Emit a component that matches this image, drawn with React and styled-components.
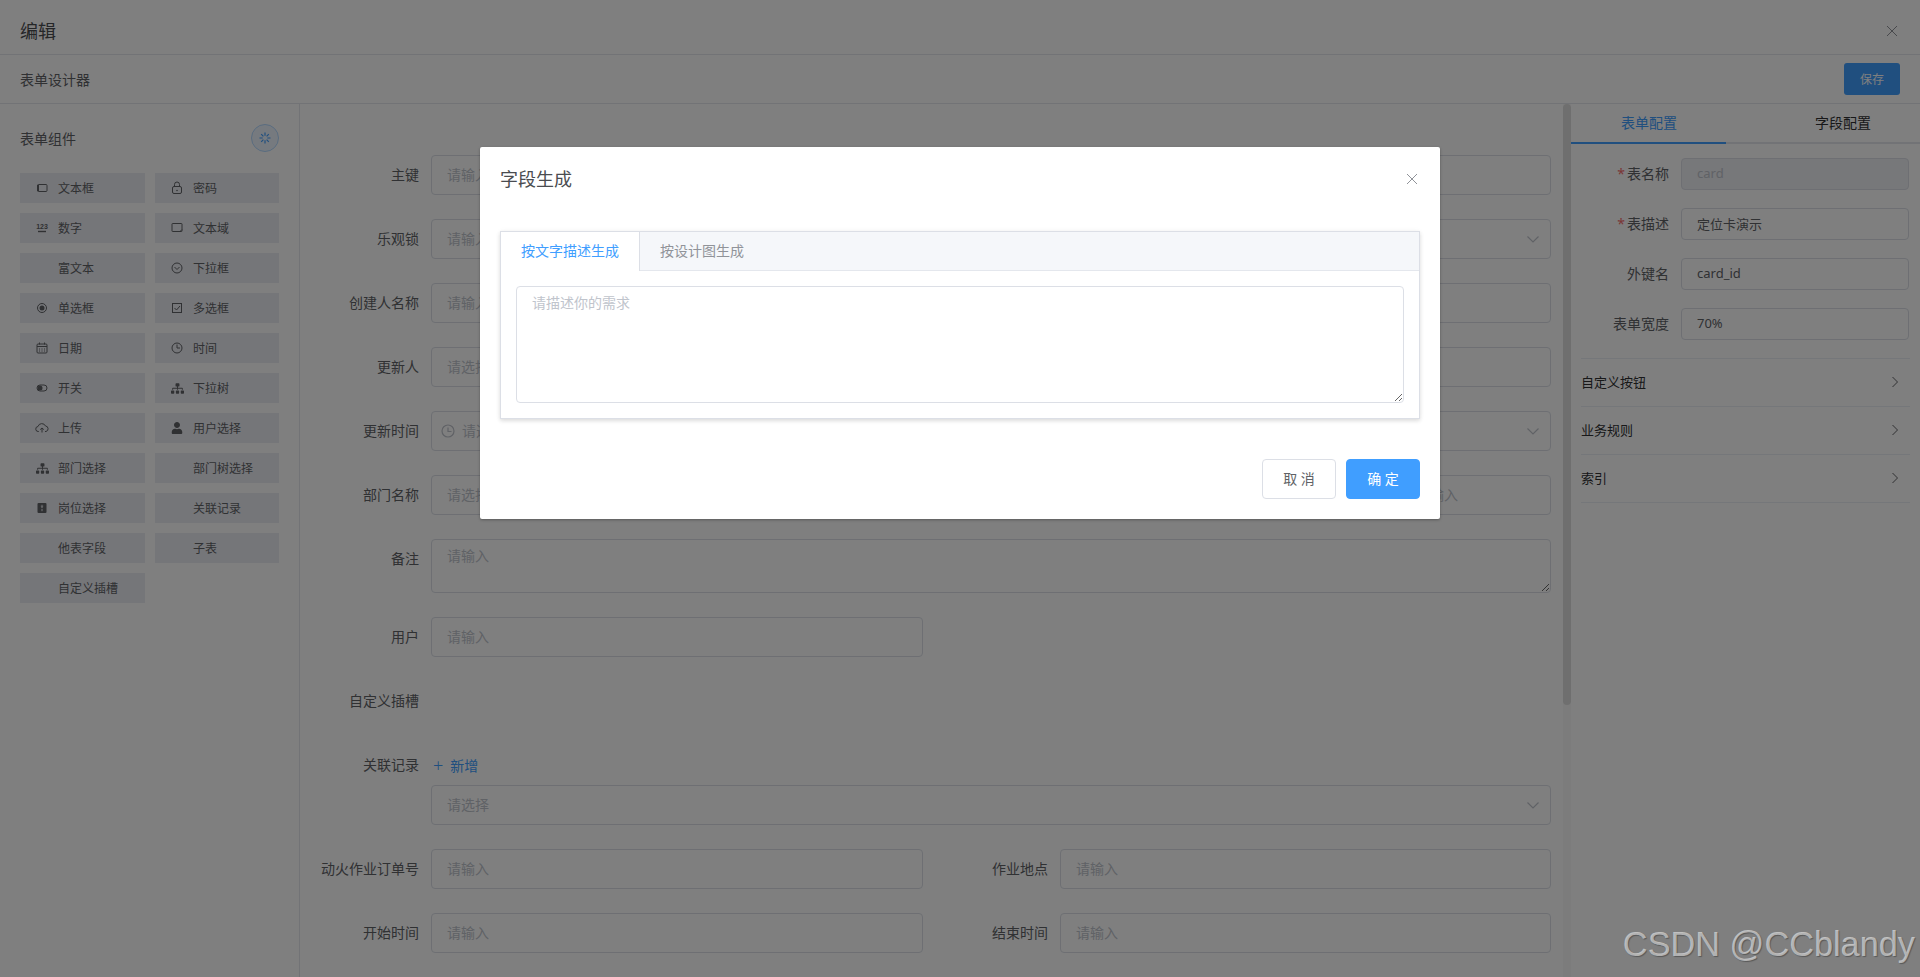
import React from "react";
import styled, { createGlobalStyle } from "styled-components";
import { FaSitemap, FaUser } from "react-icons/fa";

const GlobalStyle = createGlobalStyle`
  html, body {
    margin: 0;
    padding: 0;
    background: #fff;
  }
  * {
    box-sizing: border-box;
  }
  body, input, textarea, button {
    font-family: "Noto Sans", "Noto Sans CJK SC", "Liberation Sans", sans-serif;
  }
  input::placeholder, textarea::placeholder {
    color: #c0c4cc;
    opacity: 1;
  }
`;

const line = { fill: "none", stroke: "currentColor", strokeWidth: 1 };

const icons = {
  input: (
    <svg width="16" height="16" viewBox="0 0 16 16">
      <rect x="3.5" y="4.5" width="9.5" height="7" rx="1" {...line} />
      <rect x="3" y="5" width="2" height="6" fill="currentColor" />
    </svg>
  ),
  lock: (
    <svg width="16" height="16" viewBox="0 0 16 16">
      <rect x="3.5" y="6.5" width="9" height="7" rx="1.5" {...line} />
      <path d="M5.5 6.5V4.5a2.5 2.5 0 0 1 5 0v2" {...line} />
      <circle cx="8" cy="10.5" r="0.8" fill="currentColor" />
    </svg>
  ),
  number: (
    <svg width="16" height="16" viewBox="0 0 16 16">
      <text x="8" y="8.5" textAnchor="middle" fontSize="7" fontWeight="700" fontFamily="Liberation Sans" fill="currentColor">123</text>
      <path d="M4 11.5h8" {...line} strokeWidth="1.4" />
    </svg>
  ),
  textarea: (
    <svg width="16" height="16" viewBox="0 0 16 16">
      <rect x="3" y="3.5" width="10" height="8" rx="0.5" {...line} />
      <path d="M11 11.5l2-2" {...line} />
    </svg>
  ),
  select: (
    <svg width="16" height="16" viewBox="0 0 16 16">
      <circle cx="8" cy="8" r="5" {...line} />
      <path d="M5.5 7l2.5 2.5L10.5 7" {...line} />
    </svg>
  ),
  radio: (
    <svg width="16" height="16" viewBox="0 0 16 16">
      <circle cx="8" cy="8" r="4.5" {...line} />
      <circle cx="8" cy="8" r="2.5" fill="currentColor" />
    </svg>
  ),
  checkbox: (
    <svg width="16" height="16" viewBox="0 0 16 16">
      <rect x="3.5" y="3.5" width="9" height="9" {...line} />
      <path d="M5.5 8l2 2 3.5-4" {...line} />
    </svg>
  ),
  date: (
    <svg width="16" height="16" viewBox="0 0 16 16">
      <rect x="3" y="4" width="10" height="9" rx="1" {...line} />
      <path d="M3 6.5h10M5.5 2.5v2M10.5 2.500v2M5 9h1M7.5 9h1M10 9h1M5 11h1M7.5 11h1M10 11h1" {...line} />
    </svg>
  ),
  time: (
    <svg width="16" height="16" viewBox="0 0 16 16">
      <circle cx="8" cy="8" r="5" {...line} />
      <path d="M8 4.5V8h3" {...line} />
    </svg>
  ),
  switch: (
    <svg width="16" height="16" viewBox="0 0 16 16">
      <rect x="3" y="5" width="10" height="6" rx="3" {...line} />
      <circle cx="6" cy="8" r="2.5" fill="currentColor" />
    </svg>
  ),
  upload: (
    <svg width="16" height="16" viewBox="0 0 16 16">
      <path d="M5 11.5H4.5a2.500 2.500 0 0 1-.5-5A4 4 0 0 1 11.5 6a2.800 2.800 0 0 1 .5 5.500h-1" {...line} />
      <path d="M8 12.5V8M6.200 9.600L8 8l1.800 1.600" {...line} />
    </svg>
  ),
  sitemap: <FaSitemap size={13} />,
  user: <FaUser size={12} />,
  post: (
    <svg width="16" height="16" viewBox="0 0 16 16">
      <rect x="3.5" y="3" width="9" height="10" rx="1" fill="currentColor" />
      <path d="M8 4.800v2.400M8 8.800v2.400M6.800 6.400L8 7.500l1.200-1.100" fill="none" stroke="#ebedf3" strokeWidth="1" />
    </svg>
  ),
};

const components = [
  ["文本框", "input"], ["密码", "lock"],
  ["数字", "number"], ["文本域", "textarea"],
  ["富文本"], ["下拉框", "select"],
  ["单选框", "radio"], ["多选框", "checkbox"],
  ["日期", "date"], ["时间", "time"],
  ["开关", "switch"], ["下拉树", "sitemap"],
  ["上传", "upload"], ["用户选择", "user"],
  ["部门选择", "sitemap"], ["部门树选择"],
  ["岗位选择", "post"], ["关联记录"],
  ["他表字段"], ["子表"],
  ["自定义插槽"],
];

function Cross() {
  return (
    <CloseIcon width="12" height="12" viewBox="0 0 12 12">
      <path d="M1 1l10 10M11 1L1 11" fill="none" stroke="currentColor" strokeWidth="1" />
    </CloseIcon>
  );
}

function SelectInput({ placeholder, clock }) {
  return (
    <InputWrap>
      {clock && (
        <ClockIcon width="16" height="16" viewBox="0 0 16 16">
          <circle cx="8" cy="8" r="6" fill="none" stroke="currentColor" strokeWidth="1.200" />
          <path d="M8 4.500V8.500h3.500" fill="none" stroke="currentColor" strokeWidth="1.200" />
        </ClockIcon>
      )}
      <Input placeholder={placeholder} $clock={clock} readOnly />
      <Chevron width="14" height="14" viewBox="0 0 14 14">
        <path d="M1.500 4.500L7 10l5.500-5.500" fill="none" stroke="currentColor" strokeWidth="1.200" />
      </Chevron>
    </InputWrap>
  );
}

export default function App() {
  return (
    <Page>
      <GlobalStyle />
      <Header>
        <Title>编辑</Title>
        <Cross />
      </Header>
      <Toolbar>
        <span>表单设计器</span>
        <SaveButton>保存</SaveButton>
      </Toolbar>
      <Workspace>
        <Palette>
          <PaletteHead>
            <span>表单组件</span>
            <PinButton>
              <svg width="12" height="12" viewBox="0 0 12 12">
                <path
                  d="M6 .5v3.200M6 8.300v3.200M.5 6h3.200M8.300 6h3.200M2.200 2.200l2.200 2.200M7.600 7.600l2.200 2.200M9.800 2.200L7.600 4.400M4.400 7.600L2.200 9.800"
                  fill="none"
                  stroke="currentColor"
                  strokeWidth="1.200"
                />
              </svg>
            </PinButton>
          </PaletteHead>
          <PaletteGrid>
            {components.map(([name, icon]) => (
              <PaletteItem key={name}>
                <ItemIcon>{icon && icons[icon]}</ItemIcon>
                {name}
              </PaletteItem>
            ))}
          </PaletteGrid>
        </Palette>

        <Canvas>
          <Row>
            <Label>主键</Label>
            <Input placeholder="请输入" />
          </Row>
          <Row>
            <Label>乐观锁</Label>
            <SelectInput placeholder="请输入" />
          </Row>
          <Row>
            <Label>创建人名称</Label>
            <Input placeholder="请输入" />
          </Row>
          <Row>
            <Label>更新人</Label>
            <Input placeholder="请选择" />
          </Row>
          <Row>
            <Label>更新时间</Label>
            <SelectInput placeholder="请选择" clock />
          </Row>
          <Row>
            <Label>部门名称</Label>
            <Input placeholder="请选择" />
            <NarrowInput placeholder="请输入" />
          </Row>
          <Row $auto>
            <Label>备注</Label>
            <TextArea rows={2} placeholder="请输入" />
          </Row>
          <Row>
            <Label>用户</Label>
            <HalfField><Input placeholder="请输入" /></HalfField>
          </Row>
          <Row>
            <Label>自定义插槽</Label>
          </Row>
          <Row $tight>
            <Label>关联记录</Label>
            <AddLink><span>+</span>新增</AddLink>
          </Row>
          <Row>
            <Label />
            <SelectInput placeholder="请选择" />
          </Row>
          <Row>
            <Label>动火作业订单号</Label>
            <HalfField><Input placeholder="请输入" /></HalfField>
            <SecondLabel>作业地点</SecondLabel>
            <Input placeholder="请输入" />
          </Row>
          <Row>
            <Label>开始时间</Label>
            <HalfField><Input placeholder="请输入" /></HalfField>
            <SecondLabel>结束时间</SecondLabel>
            <Input placeholder="请输入" />
          </Row>
        </Canvas>

        <ScrollTrack><ScrollThumb /></ScrollTrack>

        <Config>
          <ConfigTabs>
            <ConfigTab $active>表单配置</ConfigTab>
            <ConfigTab>字段配置</ConfigTab>
          </ConfigTabs>
          <ConfigForm>
            <ConfigRow>
              <ConfigLabel><Star>*</Star>表名称</ConfigLabel>
              <ConfigInput value="card" disabled readOnly />
            </ConfigRow>
            <ConfigRow>
              <ConfigLabel><Star>*</Star>表描述</ConfigLabel>
              <ConfigInput value="定位卡演示" readOnly />
            </ConfigRow>
            <ConfigRow>
              <ConfigLabel>外键名</ConfigLabel>
              <ConfigInput value="card_id" readOnly />
            </ConfigRow>
            <ConfigRow>
              <ConfigLabel>表单宽度</ConfigLabel>
              <ConfigInput value="70%" readOnly />
            </ConfigRow>
          </ConfigForm>
          <Collapse>
            {["自定义按钮", "业务规则", "索引"].map((name) => (
              <CollapseRow key={name}>
                {name}
                <svg width="8" height="12" viewBox="0 0 8 12">
                  <path d="M1.500 1l5 5-5 5" fill="none" stroke="currentColor" strokeWidth="1" />
                </svg>
              </CollapseRow>
            ))}
          </Collapse>
        </Config>
      </Workspace>

      <Mask>
        <Dialog>
          <DialogHead>
            <DialogTitle>字段生成</DialogTitle>
            <Cross />
          </DialogHead>
          <DialogBody>
            <Tabs>
              <TabHead>
                <Tab $active>按文字描述生成</Tab>
                <Tab>按设计图生成</Tab>
              </TabHead>
              <TabContent>
                <TextArea rows={5} placeholder="请描述你的需求" />
              </TabContent>
            </Tabs>
          </DialogBody>
          <DialogFooter>
            <Button>取 消</Button>
            <Button $primary>确 定</Button>
          </DialogFooter>
        </Dialog>
      </Mask>
      <Watermark>CSDN @CCblandy</Watermark>
    </Page>
  );
}

const Page = styled.div`
  position: relative;
  width: 1920px;
  height: 977px;
  display: flex;
  flex-direction: column;
  overflow: hidden;
  background: #fff;
  color: #606266;
  font-size: 14px;
`;

const Header = styled.header`
  height: 55px;
  flex: none;
  display: flex;
  align-items: center;
  justify-content: space-between;
  padding: 8px 22px 0 20px;
  border-bottom: 1px solid #e4e7ed;
`;

const Title = styled.h1`
  margin: 0;
  font-size: 18px;
  line-height: 24px;
  font-weight: 400;
  color: #4a4c50;
`;

const CloseIcon = styled.svg`
  color: #909399;
`;

const Toolbar = styled.div`
  height: 49px;
  flex: none;
  display: flex;
  align-items: center;
  justify-content: space-between;
  padding: 0 20px;
  border-bottom: 1px solid #e4e7ed;
`;

const SaveButton = styled.button`
  width: 56px;
  height: 32px;
  padding: 0;
  border: none;
  border-radius: 3px;
  background: #409eff;
  color: #fff;
  font-size: 12px;
`;

const Workspace = styled.div`
  flex: 1;
  min-height: 0;
  display: flex;
`;

const Palette = styled.aside`
  width: 300px;
  flex: none;
  padding: 20px 20px 0;
  border-right: 1px solid #e4e7ed;
`;

const PaletteHead = styled.div`
  height: 28px;
  margin-bottom: 21px;
  display: flex;
  align-items: center;
  justify-content: space-between;
`;

const PinButton = styled.div`
  width: 28px;
  height: 28px;
  display: flex;
  align-items: center;
  justify-content: center;
  border: 1px solid #b3d8ff;
  border-radius: 50%;
  background: #ecf5ff;
  color: #409eff;
`;

const PaletteGrid = styled.div`
  display: grid;
  grid-template-columns: 125px 124px;
  grid-auto-rows: 30px;
  gap: 10px;
`;

const PaletteItem = styled.div`
  display: flex;
  align-items: center;
  padding-left: 14px;
  background: #ebedf3;
  font-size: 12px;
  color: #606266;
`;

const ItemIcon = styled.span`
  width: 16px;
  height: 16px;
  margin-right: 8px;
  display: flex;
  align-items: center;
  justify-content: center;
`;

const Canvas = styled.main`
  flex: 1;
  min-width: 0;
  padding: 51px 12px 0 0;
  overflow: hidden;
`;

const Row = styled.div`
  height: ${(p) => (p.$auto ? "auto" : p.$tight ? "39px" : "40px")};
  margin-bottom: ${(p) => (p.$tight ? "1px" : "24px")};
  display: flex;
  align-items: ${(p) => (p.$auto ? "flex-start" : "center")};
`;

const Label = styled.label`
  width: 131px;
  flex: none;
  padding-right: 12px;
  text-align: right;
  line-height: 40px;
  color: #606266;
`;

const SecondLabel = styled(Label)`
  width: 137px;
`;

const HalfField = styled.div`
  width: 492px;
  flex: none;
`;

const InputWrap = styled.div`
  position: relative;
  flex: 1;
  min-width: 0;
`;

const Input = styled.input`
  display: block;
  width: 100%;
  min-width: 0;
  height: 40px;
  padding: 0 15px 2px ${(p) => (p.$clock ? "30px" : "15px")};
  border: 1px solid #dcdfe6;
  border-radius: 4px;
  outline: none;
  background: #fff;
  font-size: 14px;
  color: #606266;
`;

const NarrowInput = styled(Input)`
  width: 151px;
  flex: none;
  margin-left: 10px;
`;

const ClockIcon = styled.svg`
  position: absolute;
  left: 9px;
  top: 12px;
  color: #c0c4cc;
`;

const Chevron = styled.svg`
  position: absolute;
  right: 11px;
  top: 13px;
  color: #c0c4cc;
`;

const TextArea = styled.textarea`
  display: block;
  flex: 1;
  width: 100%;
  min-width: 0;
  padding: 5px 15px;
  border: 1px solid #dcdfe6;
  border-radius: 4px;
  outline: none;
  resize: vertical;
  background: #fff;
  font-size: 14px;
  line-height: 21px;
  color: #606266;
`;

const AddLink = styled.div`
  display: flex;
  align-items: center;
  gap: 7px;
  margin-left: 2px;
  color: #409eff;
  font-size: 14px;
  span {
    font-size: 18px;
    font-weight: 300;
    line-height: 1;
  }
`;

const ScrollTrack = styled.div`
  width: 8px;
  flex: none;
  background: #f8f8f8;
`;

const ScrollThumb = styled.div`
  height: 601px;
  border-radius: 4px;
  background: #dedede;
`;

const Config = styled.aside`
  width: 349px;
  flex: none;
`;

const ConfigTabs = styled.div`
  height: 40px;
  display: flex;
  border-bottom: 2px solid #e4e7ed;
`;

const ConfigTab = styled.div`
  width: 155px;
  flex: none;
  height: 40px;
  padding: 0 0 0 ${(p) => (p.$active ? "50px" : "89px")};
  line-height: 38px;
  color: ${(p) => (p.$active ? "#409eff" : "#303133")};
  border-bottom: 2px solid ${(p) => (p.$active ? "#409eff" : "transparent")};
  white-space: nowrap;
`;

const ConfigForm = styled.div`
  padding: 14px 11px 0 0;
`;

const ConfigRow = styled.div`
  display: flex;
  align-items: center;
  height: 32px;
  margin-bottom: 18px;
`;

const ConfigLabel = styled.label`
  width: 110px;
  flex: none;
  padding: 0 12px 2px 0;
  text-align: right;
  color: #606266;
`;

const Star = styled.span`
  margin-right: 2px;
  color: #f56c6c;
`;

const ConfigInput = styled.input`
  flex: 1;
  min-width: 0;
  height: 32px;
  padding: 0 15px 2px;
  border: 1px solid #dcdfe6;
  border-radius: 4px;
  outline: none;
  background: ${(p) => (p.disabled ? "#eef0f5" : "#fff")};
  font-size: 13px;
  color: ${(p) => (p.disabled ? "#c0c4cc" : "#606266")};
`;

const Collapse = styled.div`
  margin: 0 10px;
  border-top: 1px solid #ebeef5;
`;

const CollapseRow = styled.div`
  height: 48px;
  display: flex;
  align-items: center;
  justify-content: space-between;
  padding: 0 11px 2px 0;
  border-bottom: 1px solid #ebeef5;
  font-size: 13px;
  color: #303133;
  svg {
    color: #606266;
  }
`;

const Mask = styled.div`
  position: absolute;
  inset: 0;
  padding-top: 147px;
  display: flex;
  justify-content: center;
  align-items: flex-start;
  background: rgba(0, 0, 0, 0.5);
`;

const Dialog = styled.div`
  width: 960px;
  background: #fff;
  border-radius: 2px;
  box-shadow: 0 1px 3px rgba(0, 0, 0, 0.3);
`;

const DialogHead = styled.div`
  display: flex;
  align-items: center;
  justify-content: space-between;
  padding: 20px 22px 10px 20px;
`;

const DialogTitle = styled.span`
  font-size: 18px;
  line-height: 24px;
  color: #4a4c50;
`;

const DialogBody = styled.div`
  padding: 30px 20px;
`;

const Tabs = styled.div`
  border: 1px solid #dcdfe6;
  box-shadow: 0 2px 4px 0 rgba(0, 0, 0, 0.12), 0 0 6px 0 rgba(0, 0, 0, 0.04);
`;

const TabHead = styled.div`
  height: 39px;
  display: flex;
  background: #f5f7fa;
  border-bottom: 1px solid #e4e7ed;
`;

const Tab = styled.div`
  height: 39px;
  padding: 0 20px;
  line-height: 38px;
  font-size: 14px;
  color: ${(p) => (p.$active ? "#409eff" : "#909399")};
  background: ${(p) => (p.$active ? "#fff" : "transparent")};
  border-right: ${(p) => (p.$active ? "1px solid #dcdfe6" : "none")};
`;

const TabContent = styled.div`
  padding: 15px;
`;

const DialogFooter = styled.div`
  display: flex;
  justify-content: flex-end;
  gap: 10px;
  padding: 10px 20px 20px;
`;

const Button = styled.button`
  width: 74px;
  height: 40px;
  padding: 0 0 2px;
  border: 1px solid ${(p) => (p.$primary ? "#409eff" : "#dcdfe6")};
  border-radius: 4px;
  background: ${(p) => (p.$primary ? "#409eff" : "#fff")};
  color: ${(p) => (p.$primary ? "#fff" : "#606266")};
  font-size: 14px;
`;

const Watermark = styled.div`
  position: absolute;
  right: 5px;
  bottom: 13px;
  font-family: "Liberation Sans", sans-serif;
  font-size: 34.3px;
  line-height: 40px;
  color: rgba(255, 255, 255, 0.55);
  text-shadow: 1px 1px 1px rgba(0, 0, 0, 0.3);
`;
